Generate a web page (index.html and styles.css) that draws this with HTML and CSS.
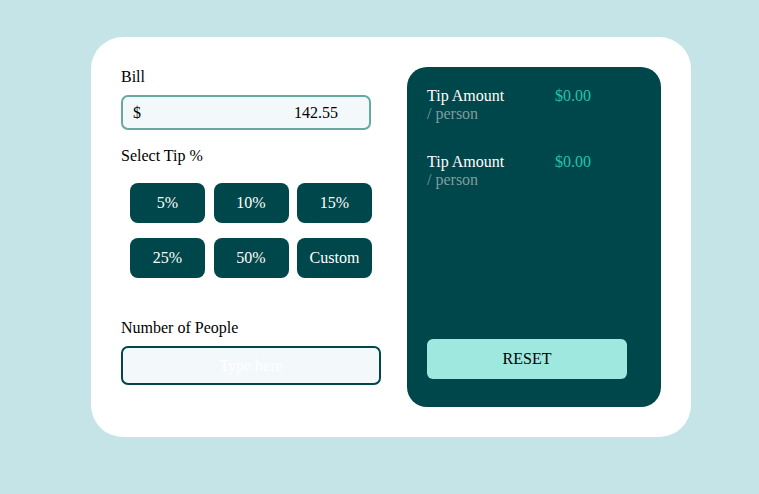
FILE: index.html
```html
<!DOCTYPE html>
<html>
<head>
<meta charset="utf-8">
<link rel="stylesheet" href="styles.css">
</head>
<body>
<main class="card">
  <section class="left">
    <div class="label">Bill</div>
    <div class="bill">
      <span class="cur">$</span>
      <span class="amount">142.55</span>
    </div>
    <div class="label tip-label">Select Tip %</div>
    <div class="tips">
      <button class="tip">5%</button>
      <button class="tip">10%</button>
      <button class="tip">15%</button>
      <button class="tip">25%</button>
      <button class="tip">50%</button>
      <button class="tip">Custom</button>
    </div>
    <div class="label people-label">Number of People</div>
    <div class="people"><span class="placeholder">Type here</span></div>
  </section>
  <section class="right">
    <div class="results">
      <div class="row">
        <div class="row-head">
          <span class="title">Tip Amount</span>
          <span class="value">$0.00</span>
        </div>
        <div class="sub">/ person</div>
      </div>
      <div class="row">
        <div class="row-head">
          <span class="title">Tip Amount</span>
          <span class="value">$0.00</span>
        </div>
        <div class="sub">/ person</div>
      </div>
    </div>
    <button class="reset">RESET</button>
  </section>
</main>
</body>
</html>
```
FILE: styles.css
```css
html, body {
  margin: 0;
  padding: 0;
}
body {
  background: #c5e4e7;
  font-family: "Liberation Serif", "Times New Roman", serif;
  font-size: 16px;
  color: #000;
  width: 759px;
  height: 494px;
  padding-top: 37px;
  box-sizing: border-box;
}
.card {
  margin-left: 91px;
  width: 600px;
  height: 400px;
  box-sizing: border-box;
  background: #fff;
  border-radius: 32px;
  padding: 30px;
  display: flex;
  gap: 26px;
}
.left {
  width: 260px;
  display: flex;
  flex-direction: column;
  align-items: flex-start;
}
.label {
  line-height: 18px;
  margin-top: 1px;
}
.bill {
  margin-top: 9px;
  width: 250px;
  height: 35px;
  box-sizing: border-box;
  border: 2px solid #67a9a1;
  border-radius: 7px;
  background: #f3f8fb;
  display: flex;
  align-items: center;
  padding: 0 31px 0 10px;
}
.amount {
  margin-left: auto;
}
.tip-label {
  margin-top: 17px;
}
.tips {
  margin-top: 18px;
  margin-left: 9px;
  display: grid;
  grid-template-columns: repeat(3, 75px);
  column-gap: 8.5px;
  row-gap: 15px;
}
.tip {
  height: 40px;
  border: none;
  border-radius: 8px;
  background: #00474b;
  color: #fff;
  font-family: "Liberation Serif", "Times New Roman", serif;
  font-size: 16px;
  padding: 0;
}
.people-label {
  margin-top: 41px;
}
.people {
  margin-top: 9px;
  width: 260px;
  height: 39px;
  box-sizing: border-box;
  border: 2px solid #00474b;
  border-radius: 7px;
  background: #f3f8fb;
  display: flex;
  align-items: center;
  justify-content: center;
}
.placeholder {
  color: #fff;
}
.right {
  width: 254px;
  box-sizing: border-box;
  background: #00474b;
  border-radius: 20px;
  padding: 20px 20px 28px;
  display: flex;
  flex-direction: column;
  justify-content: space-between;
}
.results {
  display: flex;
  flex-direction: column;
  gap: 30px;
}
.row-head {
  display: flex;
  line-height: 18px;
}
.title {
  width: 128px;
  color: #fff;
}
.value {
  color: #26c2ae;
}
.sub {
  color: #7f9d9f;
  line-height: 18px;
}
.reset {
  width: 200px;
  height: 40px;
  border: none;
  border-radius: 6px;
  background: #9fe8df;
  color: #000;
  font-family: "Liberation Serif", "Times New Roman", serif;
  font-size: 16px;
  padding: 0;
}
```
